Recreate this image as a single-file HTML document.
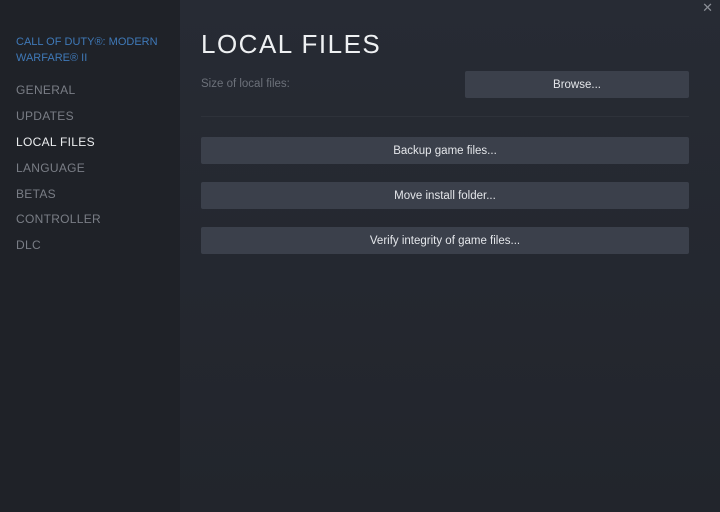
<!DOCTYPE html>
<html><head><style>
body{margin:0;width:720px;height:512px;overflow:hidden;font-family:"Liberation Sans",sans-serif;background:#262a33;position:relative}
.side{position:absolute;left:0;top:0;width:180px;height:512px;background:#1f2228}
.main{position:absolute;left:180px;top:0;width:540px;height:512px;background:linear-gradient(#272b34,#22252c)}
.t{position:absolute;left:16px;top:34px;color:#3f79b8;font-size:11px;line-height:16px;width:160px}
.n{position:absolute;left:16px;font-size:12px;color:#7a7e86;letter-spacing:.3px}
.a{color:#eceef0}
h1{position:absolute;left:201px;top:29px;margin:0;font-weight:normal;color:#eef0f2;font-size:26px;letter-spacing:1.5px}
.lbl{position:absolute;left:201px;top:78px;color:#6c717a;font-size:11.5px}
.b{position:absolute;background:#3b404b;color:#e4e6ea;font-size:11.5px;text-align:center;border-radius:2px;height:27px;line-height:29px}
.line{position:absolute;left:201px;top:116px;width:488px;height:1px;background:#2e323a}
.x{position:absolute;right:7px;top:0px;color:#8a8e96;font-size:13px}
</style></head><body>
<div class="side"></div><div class="main"></div>
<div class="t">CALL OF DUTY®: MODERN WARFARE® II</div>
<div class="n" style="top:83px">GENERAL</div>
<div class="n" style="top:109px">UPDATES</div>
<div class="n a" style="top:135px">LOCAL FILES</div>
<div class="n" style="top:161px">LANGUAGE</div>
<div class="n" style="top:187px">BETAS</div>
<div class="n" style="top:212px">CONTROLLER</div>
<div class="n" style="top:238px">DLC</div>
<h1>LOCAL FILES</h1>
<div class="lbl">Size of local files:</div>
<div class="b" style="left:465px;top:71px;width:224px">Browse...</div>
<div class="line"></div>
<div class="b" style="left:201px;top:137px;width:488px">Backup game files...</div>
<div class="b" style="left:201px;top:182px;width:488px">Move install folder...</div>
<div class="b" style="left:201px;top:227px;width:488px">Verify integrity of game files...</div>
<div class="x">✕</div>
</body></html>
